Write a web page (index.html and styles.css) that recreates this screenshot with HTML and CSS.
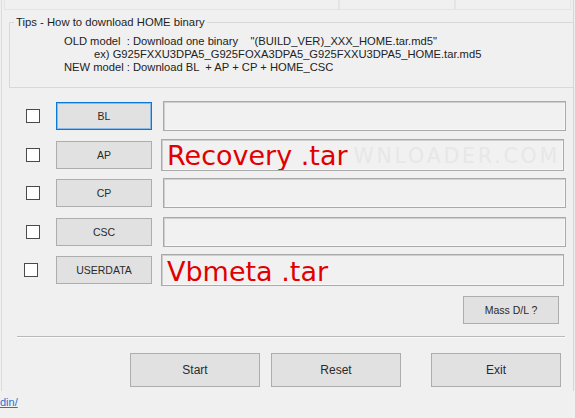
FILE: index.html
```html
<!DOCTYPE html>
<html>
<head>
<meta charset="utf-8">
<link rel="stylesheet" href="styles.css">
</head>
<body>
<div class="frame">
  <div class="topstrip">
    <div class="cell c1"></div>
    <div class="cell c2"></div>
    <div class="cell c3"></div>
  </div>
  <fieldset class="tips">
    <legend>Tips - How to download HOME binary</legend>
    <div class="tipline l1">OLD model  : Download one binary    "(BUILD_VER)_XXX_HOME.tar.md5"</div>
    <div class="tipline l2">ex) G925FXXU3DPA5_G925FOXA3DPA5_G925FXXU3DPA5_HOME.tar.md5</div>
    <div class="tipline l1">NEW model : Download BL  + AP + CP + HOME_CSC</div>
  </fieldset>

  <div class="rows">
    <div class="row">
      <span class="chk"></span>
      <button class="btn slot focus">BL</button>
      <div class="field"></div>
    </div>
    <div class="row">
      <span class="chk"></span>
      <button class="btn slot">AP</button>
      <div class="field shift">
        <span class="wm">WNLOADER.COM</span>
        <span class="big">Recovery .tar</span>
      </div>
    </div>
    <div class="row">
      <span class="chk"></span>
      <button class="btn slot">CP</button>
      <div class="field"></div>
    </div>
    <div class="row">
      <span class="chk"></span>
      <button class="btn slot">CSC</button>
      <div class="field"></div>
    </div>
    <div class="row">
      <span class="chk left"></span>
      <button class="btn slot">USERDATA</button>
      <div class="field shift">
        <span class="big">Vbmeta .tar</span>
      </div>
    </div>
  </div>

  <div class="massrow">
    <button class="btn mass">Mass D/L ?</button>
  </div>

  <div class="sep"></div>

  <div class="actions">
    <button class="btn act">Start</button>
    <button class="btn act">Reset</button>
    <button class="btn act exit">Exit</button>
  </div>
</div>
<a class="link" href="#">din/</a>
</body>
</html>
```
FILE: styles.css
```css
html, body {
  margin: 0;
  padding: 0;
  background: #f0f0f0;
  width: 575px;
  height: 418px;
  overflow: hidden;
  font-family: "Liberation Sans", Arial, sans-serif;
  color: #1e1e1e;
}

.frame {
  margin-left: 1px;
  width: 571px;
  height: 391px;
  border-left: 1px solid #dcdcdc;
  border-right: 1px solid #d6d6d6;
  box-sizing: content-box;
}

.topstrip {
  display: flex;
  height: 11px;
}
.cell {
  height: 9px;
  border: 1px solid #e4e4e4;
  border-top: none;
  box-sizing: content-box;
}
.c1 { width: 333px; margin-left: 2px; }
.c2 { width: 114px; }
.c3 { width: 114px; }

.tips {
  margin: 5px 0 0 7px;
  padding: 0 0 13px 4px;
  border: 1px solid #d8d8d8;
  border-right: none;
  font-size: 11.2px;
  line-height: 13px;
}
.tips legend {
  padding: 0 2px;
  font-size: 11.3px;
  line-height: 13px;
  color: #1e1e1e;
}
.tipline {
  white-space: pre;
  color: #222;
}
.tipline:first-of-type { margin-top: 6px; }
.l1 { margin-left: 50px; }
.l2 { margin-left: 80px; }

.rows {
  margin-top: 9px;
  display: flex;
  flex-direction: column;
}
.row {
  height: 38.5px;
  display: flex;
  align-items: center;
  padding-left: 24px;
}
.chk {
  width: 12px;
  height: 12px;
  border: 1px solid #4a4a4a;
  background: #fff;
  flex: none;
}
.chk.left { margin-left: -2px; margin-right: 2px; }

.btn {
  font-family: "Liberation Sans", Arial, sans-serif;
  background: #e1e1e1;
  border: 1px solid #adadad;
  color: #2a2a2a;
  padding: 0;
  margin: 0;
  border-radius: 0;
  box-sizing: border-box;
}
.slot {
  width: 96px;
  height: 28px;
  margin-left: 16px;
  font-size: 10.5px;
  flex: none;
}
.focus {
  border: 1px solid #0a78d7;
  box-shadow: inset 0 0 0 1px #8bbbe8;
}

.field {
  position: relative;
  margin-left: 11px;
  width: 403px;
  height: 30px;
  box-sizing: border-box;
  border: 1px solid #a9a9a9;
  box-shadow: inset 1px 1px 0 #cfcfcf, inset -1px -1px 0 #f8f8f8;
  background: #f1f1f1;
  display: flex;
  align-items: center;
  overflow: hidden;
}
.field.shift {
  margin-left: 9px;
  height: 32px;
}
.big {
  position: relative;
  top: 1.5px;
  font-family: "DejaVu Sans", sans-serif;
  font-size: 27px;
  color: #e00000;
  margin-left: 5px;
  line-height: 30px;
  white-space: nowrap;
}
.wm {
  position: absolute;
  right: 3px;
  top: 6px;
  font-family: "DejaVu Sans", sans-serif;
  font-size: 20.5px;
  letter-spacing: 2.8px;
  color: #e7e7e7;
  white-space: nowrap;
  line-height: 20px;
}

.massrow {
  display: flex;
  justify-content: flex-end;
  padding-right: 14px;
  margin-top: 6px;
}
.mass {
  width: 96px;
  height: 28px;
  font-size: 10.5px;
}

.sep {
  margin: 12px 8px 0 15px;
  height: 0;
  border-top: 1px solid #b9b9b9;
  border-bottom: 1px solid #fbfbfb;
}

.actions {
  display: flex;
  margin-top: 15px;
  padding-left: 128px;
}
.act {
  width: 130px;
  height: 34px;
  font-size: 12px;
  margin-right: 11px;
}
.act.exit { margin-left: 19px; margin-right: 0; }

.link {
  display: block;
  margin-top: 5px;
  font-size: 11px;
  line-height: 13px;
  color: #2a6fd0;
  text-decoration: underline;
}
```
